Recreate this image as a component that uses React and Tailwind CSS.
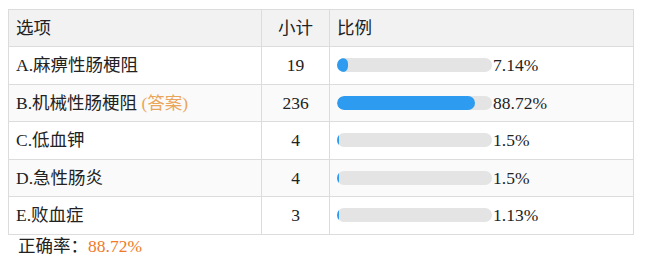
import React from 'react';

const rows = [
  { label: 'A.麻痹性肠梗阻', count: 19, pct: 7.14, answer: false },
  { label: 'B.机械性肠梗阻', count: 236, pct: 88.72, answer: true },
  { label: 'C.低血钾', count: 4, pct: 1.5, answer: false },
  { label: 'D.急性肠炎', count: 4, pct: 1.5, answer: false },
  { label: 'E.败血症', count: 3, pct: 1.13, answer: false },
];

function Bar({ pct }) {
  return (
    <div className="w-[155px] h-[14px] rounded-full bg-[#e4e4e4] overflow-hidden">
      <div className="h-full rounded-full bg-[#2d9cf0]" style={{ width: `${Math.max(pct, 1.2)}%` }} />
    </div>
  );
}

export default function App() {
  return (
    <div
      className="w-[648px] h-[259px] bg-white text-[17.5px] text-[#222] pt-[9px] pl-[8px]"
      style={{ fontFamily: '"Liberation Serif", "Noto Sans CJK SC", serif' }}
    >
      <table className="w-[626px] border-collapse border border-[#dcdcdc]">
        <thead>
          <tr className="h-[37px] bg-[#f2f2f2]">
            <th className="border border-[#dcdcdc] w-[253px] text-left font-normal pl-[7px]">选项</th>
            <th className="border border-[#dcdcdc] w-[68px] text-center font-normal">小计</th>
            <th className="border border-[#dcdcdc] text-left font-normal pl-[7px]">比例</th>
          </tr>
        </thead>
        <tbody>
          {rows.map((r, i) => (
            <tr key={r.label} className={`h-[37.5px] ${i % 2 === 1 ? 'bg-[#fafafa]' : 'bg-white'}`}>
              <td className="border border-[#dcdcdc] pl-[7px]">
                {r.label}
                {r.answer && <span className="text-[#eaa55a]"> (答案)</span>}
              </td>
              <td className="border border-[#dcdcdc] text-center">{r.count}</td>
              <td className="border border-[#dcdcdc] pl-[7px]">
                <div className="flex items-center">
                  <Bar pct={r.pct} />
                  <span className="ml-[1px]">{r.pct}%</span>
                </div>
              </td>
            </tr>
          ))}
        </tbody>
      </table>
      <div className="pl-[10px] mt-[0px] leading-[22px]">
        正确率：<span className="text-[#f07a2a]">88.72%</span>
      </div>
    </div>
  );
}
